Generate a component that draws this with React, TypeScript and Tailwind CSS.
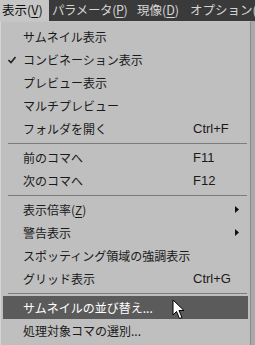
import React from "react";

type Item =
  | { kind: "sep" }
  | { kind: "item"; label: string; shortcut?: string; checked?: boolean; sub?: boolean; active?: boolean };

const ITEMS: Item[] = [
  { kind: "item", label: "サムネイル表示" },
  { kind: "item", label: "コンビネーション表示", checked: true },
  { kind: "item", label: "プレビュー表示" },
  { kind: "item", label: "マルチプレビュー" },
  { kind: "item", label: "フォルダを開く", shortcut: "Ctrl+F" },
  { kind: "sep" },
  { kind: "item", label: "前のコマへ", shortcut: "F11" },
  { kind: "item", label: "次のコマへ", shortcut: "F12" },
  { kind: "sep" },
  { kind: "item", label: "表示倍率(Z)", sub: true },
  { kind: "item", label: "警告表示", sub: true },
  { kind: "item", label: "スポッティング領域の強調表示" },
  { kind: "item", label: "グリッド表示", shortcut: "Ctrl+G" },
  { kind: "sep" },
  { kind: "item", label: "サムネイルの並び替え...", active: true },
  { kind: "item", label: "処理対象コマの選別..." },
  { kind: "sep" },
];

// Underline the access key inside "(X)".
function Label({ text }: { text: string }) {
  const m = text.match(/^(.*\()(.)(\).*)$/);
  if (!m) return <>{text}</>;
  return (
    <>
      {m[1]}
      <span className="underline underline-offset-2">{m[2]}</span>
      {m[3]}
    </>
  );
}

function Check() {
  return (
    <svg width="8" height="8" viewBox="0 0 8 8" className="absolute left-[5px] top-[8px]">
      <path d="M0.5 4 L3 6.5 L7.5 1" stroke="#222" strokeWidth="1.6" fill="none" />
    </svg>
  );
}

function Cursor() {
  return (
    <svg width="14" height="22" viewBox="0 0 14 22" className="absolute left-[172px] top-[299px]">
      <path
        d="M1 1 L1 16 L4.5 12.5 L7.5 19.5 L10 18.5 L7 11.5 L12 11.5 Z"
        fill="#fff"
        stroke="#000"
        strokeWidth="1"
        strokeLinejoin="round"
      />
    </svg>
  );
}

export default function App() {
  const font = { fontFamily: '"Noto Sans CJK JP", "Noto Sans", sans-serif' };
  return (
    <div className="relative w-[255px] h-[345px] overflow-hidden bg-[#a9a9a9] text-[12px] leading-none" style={font}>
      {/* menu bar */}
      <div className="flex h-[21px] items-center overflow-hidden bg-[#3a3a3a] text-[12.5px] text-[#d4d4d4] whitespace-nowrap">
        <div className="flex h-full w-[49px] shrink-0 items-center bg-[#c6c6c6] pl-[2px] text-[#111]">
          <Label text="表示(V)" />
        </div>
        <div className="w-[88px] shrink-0 overflow-visible pl-[3px] tracking-[-0.4px]"><Label text="パラメータ(P)" /></div>
        <div className="w-[53px] shrink-0"><Label text="現像(D)" /></div>
        <div className="shrink-0"><Label text="オプション(" /></div>
      </div>

      {/* dropdown */}
      <div className="w-[251px] border-l border-t border-r border-l-[#d4d4d4] border-t-[#c4c4c4] border-r-[#8a8a8a] bg-[#bfbfbf] px-[2px] pt-[3px] text-[#1a1a1a]">
        {ITEMS.map((it, i) =>
          it.kind === "sep" ? (
            <div key={i} className="flex h-[6px] items-center pl-[5px] pr-[1px]">
              <div className="h-px w-full bg-[#7c7c7c]" />
            </div>
          ) : (
            <div
              key={i}
              className={
                "relative flex h-[23px] items-center whitespace-nowrap pl-[20px] " +
                (it.active ? "bg-[#5b5b5b] text-white" : "")
              }
            >
              {it.checked && <Check />}
              <span className="flex-1">
                <Label text={it.label} />
              </span>
              {it.shortcut && <span className="w-[55px] text-[13px]" style={{ fontFamily: '"Liberation Sans", sans-serif' }}>{it.shortcut}</span>}
              {it.sub && (
                <svg width="4" height="7" viewBox="0 0 4 7" className="mr-[9px]">
                  <path d="M0 0 L4 3.5 L0 7 Z" fill="#111" />
                </svg>
              )}
            </div>
          )
        )}
      </div>
      <Cursor />
    </div>
  );
}
